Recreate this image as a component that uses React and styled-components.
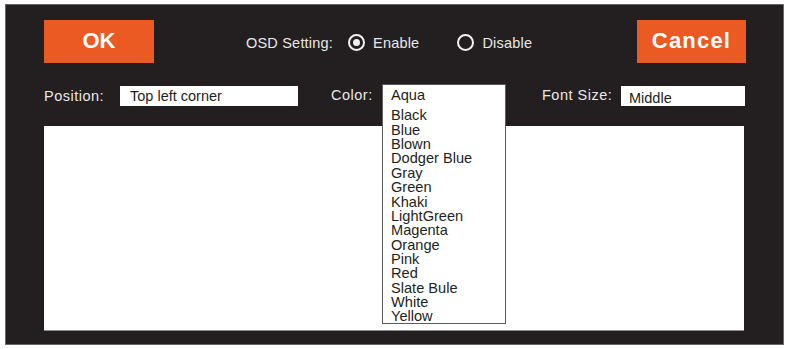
import React from 'react';
import styled, { createGlobalStyle } from 'styled-components';

const GlobalStyle = createGlobalStyle`
  html, body {
    margin: 0;
    padding: 0;
    background: #ffffff;
  }
  body {
    font-family: 'Liberation Sans', Arial, sans-serif;
  }
`;

const Panel = styled.div`
  box-sizing: border-box;
  margin: 4px 0 0 5px;
  width: 779px;
  height: 341px;
  background: #231f20;
  border: 1px solid #6a6869;
  padding: 15px 38px 0 38px;
  display: flex;
  flex-direction: column;
`;

const TopRow = styled.div`
  display: flex;
  align-items: center;
  height: 43px;
`;

const ActionButton = styled.button`
  box-sizing: border-box;
  width: ${props => props.width}px;
  height: 43px;
  border: none;
  background: #ec5a24;
  color: #ffffff;
  font-family: 'Liberation Sans', Arial, sans-serif;
  font-weight: bold;
  font-size: 22px;
  letter-spacing: ${props => props.spacing || 0}px;
  padding: 0;
  margin-left: ${props => (props.right ? 'auto' : '0')};
  margin-right: ${props => (props.right ? '-1px' : '0')};
  padding-bottom: 1px;
  cursor: pointer;
`;

const OsdGroup = styled.div`
  display: flex;
  align-items: center;
  margin-left: 92px;
  margin-top: 2px;
  color: #e9e8e8;
  font-size: 14.5px;
  letter-spacing: 0.2px;
`;

const OsdLabel = styled.span`
  margin-right: 15px;
`;

const RadioOption = styled.label`
  display: flex;
  align-items: center;
  gap: 8px;
  margin-right: ${props => props.gap || 0}px;
  cursor: pointer;
`;

const RadioMark = styled.span`
  box-sizing: border-box;
  width: 17px;
  height: 17px;
  border: 2px solid #f2f2f2;
  border-radius: 50%;
  display: flex;
  align-items: center;
  justify-content: center;

  &::after {
    content: '';
    display: ${props => (props.checked ? 'block' : 'none')};
    width: 7px;
    height: 7px;
    border-radius: 50%;
    background: #f2f2f2;
  }
`;

const FieldRow = styled.div`
  display: flex;
  align-items: center;
  margin-top: 23px;
  height: 20px;
`;

const FieldLabel = styled.span`
  width: ${props => props.width}px;
  margin-left: ${props => props.offset || 0}px;
  margin-top: ${props => props.lift || 0}px;
  color: #e9e8e8;
  font-size: 14.5px;
  letter-spacing: 0.5px;
`;

const TextBox = styled.div`
  box-sizing: border-box;
  width: ${props => props.width}px;
  height: 20px;
  background: #ffffff;
  color: #231f20;
  font-size: 14.5px;
  line-height: 20px;
  padding-left: ${props => props.indent}px;
  padding-top: ${props => props.drop || 0}px;
`;

const DropAnchor = styled.div`
  position: relative;
  width: 124px;
  height: 20px;
`;

const DropList = styled.ul`
  position: absolute;
  top: -2px;
  left: 0;
  z-index: 2;
  box-sizing: border-box;
  width: 124px;
  height: 240px;
  margin: 0;
  padding: 0 0 0 8px;
  list-style: none;
  background: #ffffff;
  border: 1px solid #5c5a5b;
  color: #231f20;
  font-size: 14.6px;
`;

const DropItem = styled.li`
  line-height: ${props => (props.first ? '21px' : '14.36px')};
  margin-bottom: ${props => (props.first ? '2.4px' : '0')};
  white-space: nowrap;
`;

const Canvas = styled.div`
  margin-top: 20px;
  width: 700px;
  height: 205px;
  background: #ffffff;
  border-bottom: 1px solid #8a8a8a;
  box-sizing: border-box;
`;

const colors = [
  'Aqua',
  'Black',
  'Blue',
  'Blown',
  'Dodger Blue',
  'Gray',
  'Green',
  'Khaki',
  'LightGreen',
  'Magenta',
  'Orange',
  'Pink',
  'Red',
  'Slate Bule',
  'White',
  'Yellow',
];

const App = () => {
  return (
    <>
      <GlobalStyle />
      <Panel>
        <TopRow>
          <ActionButton width={110}>OK</ActionButton>
          <OsdGroup>
            <OsdLabel>OSD Setting:</OsdLabel>
            <RadioOption gap={38}>
              <RadioMark checked />
              Enable
            </RadioOption>
            <RadioOption>
              <RadioMark />
              Disable
            </RadioOption>
          </OsdGroup>
          <ActionButton width={109} spacing={1.2} right>
            Cancel
          </ActionButton>
        </TopRow>

        <FieldRow>
          <FieldLabel width={76}>Position:</FieldLabel>
          <TextBox width={178} indent={10}>Top left corner</TextBox>
          <FieldLabel width={51} offset={33} lift={-2}>Color:</FieldLabel>
          <DropAnchor>
            <DropList>
              {colors.map((c, i) => (
                <DropItem key={c} first={i === 0}>
                  {c}
                </DropItem>
              ))}
            </DropList>
          </DropAnchor>
          <FieldLabel width={79} offset={36} lift={-2}>Font Size:</FieldLabel>
          <TextBox width={124} indent={8} drop={2}>Middle</TextBox>
        </FieldRow>

        <Canvas />
      </Panel>
    </>
  );
};

export default App;
